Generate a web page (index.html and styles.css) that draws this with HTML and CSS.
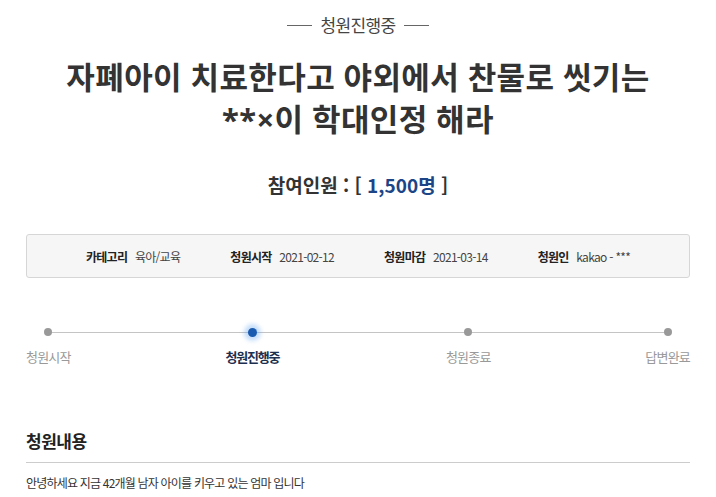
FILE: index.html
```html
<!DOCTYPE html>
<html lang="ko">
<head>
    <meta charset="UTF-8">
    <meta name="viewport" content="width=device-width, initial-scale=1.0">
    <title>청원진행중</title>
    <link rel="stylesheet" href="styles.css">
</head>
<body>
    <div class="petition">
        <div class="status"><span>청원진행중</span></div>
        <h1 class="title">자폐아이 치료한다고 야외에서 찬물로 씻기는<br>**×이 학대인정 해라</h1>
        <p class="count">참여인원 : [ <span class="num">1,500명</span> ]</p>

        <ul class="info">
            <li><b>카테고리</b> 육아/교육</li>
            <li><b>청원시작</b> 2021-02-12</li>
            <li><b>청원마감</b> 2021-03-14</li>
            <li><b>청원인</b> kakao - ***</li>
        </ul>

        <ol class="steps">
            <li class="step">청원시작</li>
            <li class="step active">청원진행중</li>
            <li class="step">청원종료</li>
            <li class="step">답변완료</li>
        </ol>

        <h2 class="section-title">청원내용</h2>
        <p class="content">안녕하세요 지금 42개월 남자 아이를 키우고 있는 엄마 입니다</p>
    </div>
</body>
</html>
```

FILE: styles.css
```css
body {
    margin: 0;
    font-family: "Noto Sans CJK KR", "Noto Sans", sans-serif;
    color: #333;
    background: #fff;
}

.petition {
    width: 664px;
    margin: 0 auto;
    padding-top: 14px;
}

.status {
    display: flex;
    justify-content: center;
    align-items: center;
    gap: 8px;
    font-size: 17px;
    line-height: 22px;
    color: #444;
    letter-spacing: -0.6px;
}

.status::before,
.status::after {
    content: "";
    width: 25px;
    height: 1px;
    background: #666;
}

.title {
    margin: 20px 0 0;
    text-align: center;
    font-family: "Noto Sans", "Noto Sans CJK KR", sans-serif;
    font-size: 31px;
    line-height: 42px;
    font-weight: bold;
    color: #333;
    letter-spacing: 0.4px;
}

.count {
    margin: 30px 0 0;
    text-align: center;
    font-size: 19px;
    line-height: 30px;
    font-weight: bold;
    color: #333;
}

.count .num {
    color: #1c4587;
}

.info {
    list-style: none;
    margin: 34px 0 0;
    padding: 0;
    height: 42px;
    display: flex;
    justify-content: center;
    align-items: center;
    gap: 50px;
    background: #f6f6f6;
    border: 1px solid #d6d6d6;
    border-radius: 3px;
    font-size: 12px;
    color: #444;
    letter-spacing: -0.7px;
}

.info b {
    margin-right: 5px;
    color: #222;
}

.steps {
    list-style: none;
    margin: 48px 0 0;
    padding: 0;
    position: relative;
    display: flex;
    justify-content: space-between;
}

.steps::before {
    content: "";
    position: absolute;
    left: 21px;
    right: 22px;
    top: 6px;
    height: 1px;
    background: #c4c4c4;
}

.step {
    display: flex;
    flex-direction: column;
    align-items: center;
    font-size: 13px;
    line-height: 18px;
    color: #999;
    letter-spacing: -0.8px;
}

.step::before {
    content: "";
    width: 8px;
    height: 8px;
    margin: 2px 0 12px;
    border-radius: 50%;
    background: #999;
    position: relative;
}

.step.active {
    margin-right: 12px;
    color: #1d2f4f;
    font-weight: bold;
    letter-spacing: -1.2px;
}

.step.active::before {
    width: 9px;
    height: 9px;
    margin: 1.5px 0 11.5px;
    background: #1a5bb0;
    box-shadow: 0 0 4px 4px rgba(90, 160, 240, 0.35);
}

.section-title {
    margin: 62px 0 0;
    padding-bottom: 8px;
    border-bottom: 1px solid #ccc;
    font-size: 17px;
    line-height: 26px;
    font-weight: bold;
    color: #222;
    letter-spacing: -0.5px;
}

.content {
    margin: 10px 0 0;
    font-size: 12px;
    line-height: 20px;
    color: #333;
    letter-spacing: -0.8px;
}
```
